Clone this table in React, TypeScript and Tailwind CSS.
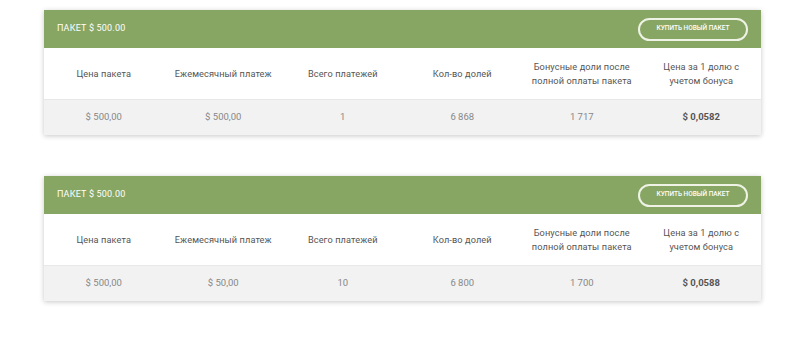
const packages = [
  {
    title: 'ПАКЕТ $ 500.00',
    values: ['$ 500,00', '$ 500,00', '1', '6 868', '1 717', '$ 0,0582'],
  },
  {
    title: 'ПАКЕТ $ 500.00',
    values: ['$ 500,00', '$ 50,00', '10', '6 800', '1 700', '$ 0,0588'],
  },
]

const headers = [
  ['Цена пакета'],
  ['Ежемесячный платеж'],
  ['Всего платежей'],
  ['Кол-во долей'],
  ['Бонусные доли после', 'полной оплаты пакета'],
  ['Цена за 1 долю с', 'учетом бонуса'],
]

function PackageCard({ title, values }: { title: string; values: string[] }) {
  return (
    <div className="w-[717px] bg-white shadow-[0_1px_5px_rgba(0,0,0,0.22)]">
      <div className="h-[38px] bg-[#87a663] flex items-center justify-between pl-[13px] pr-[13px]">
        <span className="text-white text-[9px] tracking-[0.2px]">{title}</span>
        <button className="w-[110px] h-[23px] rounded-full border-2 border-[#eef3e6] text-white text-[6.5px] font-medium uppercase">
          купить новый пакет
        </button>
      </div>

      <div className="grid grid-cols-6 h-[51px] items-center">
        {headers.map((lines) => (
          <div key={lines[0]} className="flex flex-col items-center text-[9.2px] leading-[14px] tracking-[0.1px] text-[#555] whitespace-nowrap">
            {lines.map((l) => (
              <span key={l}>{l}</span>
            ))}
          </div>
        ))}
      </div>

      <div className="grid grid-cols-6 h-[36px] items-center bg-[#f2f2f2] border-t border-[#e8e8e8]">
        {values.map((v, i) => (
          <div
            key={i}
            className={
              i === values.length - 1
                ? 'text-center text-[9.5px] font-bold text-[#555]'
                : 'text-center text-[9.5px] text-[#888]'
            }
          >
            {v}
          </div>
        ))}
      </div>
    </div>
  )
}

export default function App() {
  return (
    <div className="w-[800px] h-[338px] bg-white pt-[10px] pl-[44px] flex flex-col gap-[41px] font-['Roboto',sans-serif]">
      {packages.map((p, i) => (
        <PackageCard key={i} title={p.title} values={p.values} />
      ))}
    </div>
  )
}
